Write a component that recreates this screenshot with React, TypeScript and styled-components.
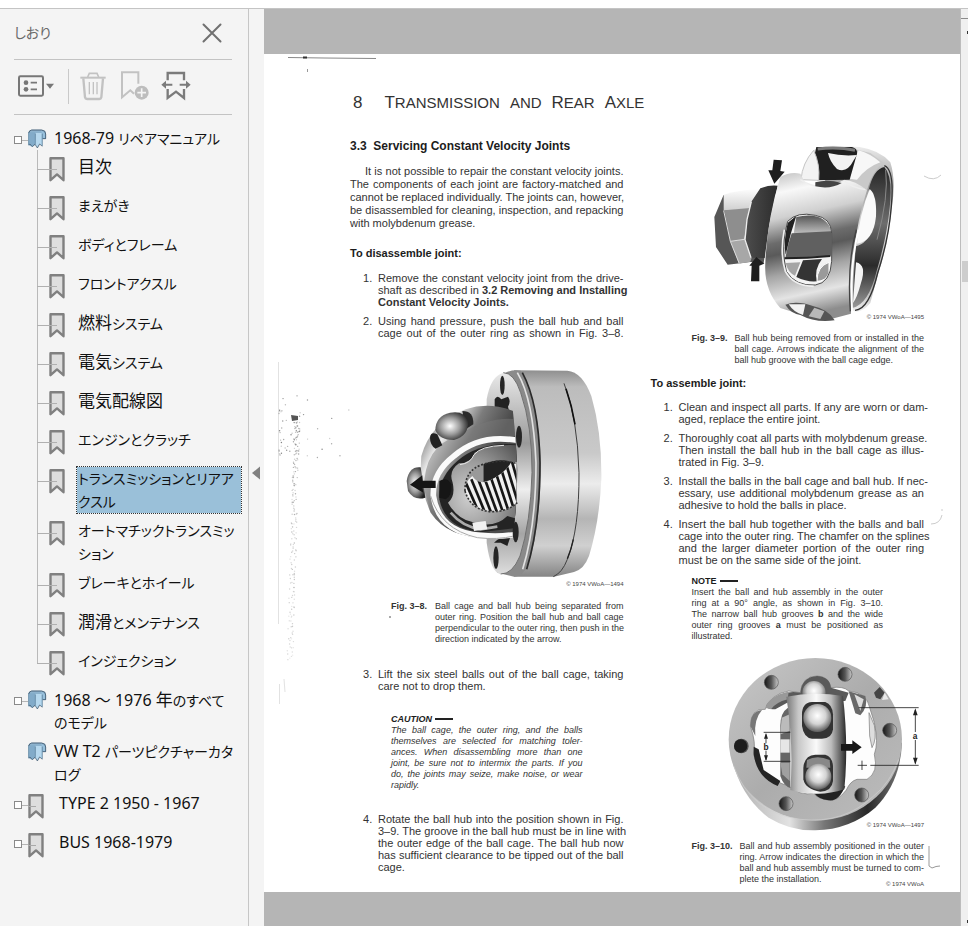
import React from "react";
import styled, { createGlobalStyle, css } from "styled-components";

const GlobalStyle = createGlobalStyle`
  *, *::before, *::after { box-sizing: border-box; }
  body { margin: 0; background: #fff; }
  h1, h2, h3, p, ol, ul, li, figure { margin: 0; padding: 0; }
  ol, ul { list-style: none; }
  button { font: inherit; color: inherit; background: none; border: 0; padding: 0; cursor: pointer; }
`;

/* ---------- window frame ---------- */

const Window = styled.div`
  display: flex;
  flex-direction: column;
  min-height: 100vh;
`;

const TopStrip = styled.div`
  height: 9px;
  flex: none;
  background: #fff;
  border-bottom: 1px solid #c4c4c4;
`;

const Workspace = styled.div`
  flex: 1;
  display: grid;
  grid-template-columns: 249px 15px minmax(0, 1fr) 8px;
`;

/* ---------- bookmark panel ---------- */

const Panel = styled.aside`
  background: #f4f4f4;
  border-right: 1px solid #c6c6c6;
  color: #111;
  font-family: "Noto Sans", "Noto Sans CJK JP", sans-serif;
  font-size: 14px;
  font-feature-settings: "palt";
`;

const PanelHeader = styled.header`
  display: flex;
  align-items: center;
  justify-content: space-between;
  height: 51px;
  margin: 0 16px 0 14px;
  padding: 0 10px 2px 0;
  border-bottom: 1px solid #c3c3c3;
`;

const PanelTitle = styled.h2`
  font-size: 14px;
  font-weight: 400;
  line-height: 20px;
  color: #6a6a6a;
`;

const Toolbar = styled.div`
  display: flex;
  align-items: center;
  height: 55px;
  margin: 0 16px 0 14px;
  padding: 0 0 2px 4px;
  border-bottom: 1px solid #c3c3c3;
`;

const ToolButton = styled.button<{ $gap?: number }>`
  display: flex;
  margin-left: ${(p) => p.$gap ?? 0}px;
`;

const ToolDivider = styled.span`
  width: 1px;
  height: 35px;
  margin: 0 11px 0 14px;
  background: #c9c9c9;
`;

const Tree = styled.ul`
  padding: 12px 7px 0 14px;
`;

const RootRow = styled.div<{ $tight?: boolean }>`
  display: grid;
  grid-template-columns: 14px 25px minmax(0, 1fr);
  min-height: ${(p) => (p.$tight ? 28 : 39)}px;
  padding-bottom: ${(p) => (p.$tight ? 5 : 6)}px;
`;

const Expander = styled.button<{ $hidden?: boolean }>`
  display: ${(p) => (p.$hidden ? "none" : "flex")};
  align-items: center;
  align-self: start;
  height: 8px;
  margin-top: 9px;
  &::before {
    content: "";
    width: 8px;
    height: 8px;
    border: 1px solid #8a8a8a;
    background: #fff;
  }
  &::after {
    content: "";
    width: 7px;
    height: 1px;
    background: #b5b5b5;
  }
`;

const RootIcon = styled.span`
  grid-column: 2;
  display: flex;
  align-items: flex-start;
`;

const Children = styled.ul`
  padding-left: 23px;
`;

const ChildRow = styled.li`
  position: relative;
  display: grid;
  grid-template-columns: 28px minmax(0, 1fr);
  min-height: 39px;
  padding: 0 0 6px 12px;
  &::before {
    content: "";
    position: absolute;
    left: 0;
    top: 0;
    bottom: 0;
    border-left: 1px solid #b9b9b9;
  }
  &:first-child::before { top: -5px; }
  &:last-child::before { bottom: auto; height: 15px; }
  &::after {
    content: "";
    position: absolute;
    left: 0;
    top: 14px;
    width: 20px;
    height: 1px;
    background: #b0b0b0;
  }
`;

const Label = styled.button<{ $selected?: boolean; $indent?: boolean }>`
  display: block;
  align-self: start;
  text-align: left;
  line-height: 23px;
  white-space: nowrap;
  padding-left: ${(p) => (p.$indent ? 5 : 0)}px;
  ${(p) =>
    p.$selected &&
    css`
      background: #9ac0d9;
      outline: 1px dotted #333;
    `}
`;

const LabelLine = styled.span`
  display: block;
  height: 23px;
  padding-left: 1px;
`;

const Kanji = styled.span`
  font-size: 17px;
`;

const Latin = styled.span`
  font-size: 16px;
`;

const Gutter = styled.div`
  background: #f4f4f4;
  display: flex;
  align-items: flex-start;
  padding: 457px 0 0 3px;
`;

const CollapseButton = styled.button`
  display: flex;
`;

/* ---------- document viewer ---------- */

const Viewer = styled.main`
  background: #b5b5b5;
  padding-top: 45px;
`;

const ScrollTrack = styled.div`
  display: flex;
  flex-direction: column;
  background: #f0f0f0;
  border-left: 1px solid #bdbdbd;
`;

const ScrollHead = styled.div`
  height: 10px;
  border-bottom: 1px solid #8c8c8c;
`;

const ScrollArrow = styled.span`
  align-self: flex-end;
  width: 1px;
  height: 3px;
  margin: 12px 0 3px;
  background: #333;
`;

const ScrollThumb = styled.div`
  height: 21px;
  margin: 224px 0 auto 1px;
  background: #cdcdcd;
`;

const Page = styled.article`
  position: relative;
  background: #fff;
  color: #333;
  font-family: "Liberation Sans", Arial, sans-serif;
  font-size: 11px;
  line-height: 12px;
  padding: 38px 36px 4px 86px;
`;

const ScanMarks = styled.svg`
  position: absolute;
  left: 0;
  top: 0;
  width: 100%;
  height: 100%;
  pointer-events: none;
`;

const PageTitle = styled.h1`
  display: flex;
  align-items: baseline;
  gap: 10px;
  padding-left: 3px;
  font-size: 17px;
  font-weight: 400;
  line-height: 21px;
  white-space: nowrap;
`;

const PageNumber = styled.span`
  margin-right: 12px;
`;

const SmallCaps = styled.span`
  font-size: 15px;
`;

const Columns = styled.div`
  display: grid;
  grid-template-columns: repeat(2, minmax(0, 1fr));
  column-gap: 27px;
  padding-top: 26px;
`;

const Column = styled.section``;

const SectionTitle = styled.h2`
  font-size: 12px;
  line-height: 14px;
  font-weight: 700;
  white-space: pre;
  color: #1c1c1c;
`;

const Intro = styled.p`
  margin-top: 12px;
  line-height: 13px;
`;

const Line = styled.span<{ $end?: boolean; $indent?: boolean }>`
  display: block;
  white-space: nowrap;
  text-align: justify;
  text-align-last: ${(p) => (p.$end ? "left" : "justify")};
  padding-left: ${(p) => (p.$indent ? 15 : 0)}px;
`;

const StepTitle = styled.h3<{ $top: number }>`
  margin-top: ${(p) => p.$top}px;
  font-size: 11px;
  line-height: 14px;
  font-weight: 700;
  color: #1c1c1c;
`;

const Steps = styled.ol<{ $top: number }>`
  display: flex;
  flex-direction: column;
  gap: 7px;
  margin-top: ${(p) => p.$top}px;
  padding-left: 13px;
`;

const Step = styled.li`
  display: grid;
  grid-template-columns: 15px minmax(0, 1fr);
`;

const Notice = styled.div<{ $top: number; $italic?: boolean }>`
  margin: ${(p) => p.$top}px 41px 0 41px;
  font-size: 9px;
  line-height: 11px;
  font-style: ${(p) => (p.$italic ? "italic" : "normal")};
`;

const NoticeTitle = styled.h3`
  display: flex;
  align-items: center;
  gap: 3px;
  font-size: 9px;
  line-height: 12px;
  color: #1c1c1c;
  &::after {
    content: "";
    width: 18px;
    height: 2px;
    background: #222;
  }
`;

const Figure = styled.figure<{ $top: number }>`
  display: flex;
  flex-direction: column;
  margin-top: ${(p) => p.$top}px;
`;

const Drawing = styled.svg<{ $left: number }>`
  display: block;
  margin-left: ${(p) => p.$left}px;
  overflow: visible;
`;

const Credit = styled.small<{ $lift?: number }>`
  align-self: flex-end;
  margin-top: -${(p) => p.$lift ?? 0}px;
  font-size: 6px;
  line-height: 8px;
  color: #444;
`;

const Caption = styled.figcaption<{ $label: number; $top: number }>`
  display: grid;
  grid-template-columns: ${(p) => p.$label}px minmax(0, 1fr);
  margin-top: ${(p) => p.$top}px;
  padding-left: 41px;
  font-size: 9px;
  line-height: 11px;
`;

/* ---------- icons ---------- */

const BookmarkIcon = () => (
  <svg width="16" height="27" viewBox="0 0 16 27" aria-hidden="true">
    <path d="M1.500 3.300H14.500V25.200L8 19.400L1.500 25.200Z" fill="#dedede" stroke="#808080" strokeWidth="2.400" strokeLinejoin="round" />
    <path d="M0 14.500H8" stroke="#a9a9a9" />
  </svg>
);

const BlueBookmarksIcon = () => (
  <svg width="19" height="23" viewBox="-1 -8 57 69" aria-hidden="true">
    <path d="M0 8Q2 0 10 0H38Q53 0 53 12V28H42V50L34 43L28 55L20 44L12 52L0 46Z" fill="#8db3ce" />
    <path d="M4 8H21V45L12 50L3 44Z" fill="#82abc9" />
    <path d="M22 10H40V47L33 42L27 53L21 44Z" fill="#b6d8ee" />
    <path d="M38 5Q49 5 50 13V26H43V13Z" fill="#97c0dc" />
    <path d="M1 10Q3 2 10 1H40Q52 2 52 13V27H43" fill="none" stroke="#3f566a" strokeWidth="2.500" />
    <path d="M21 12V44M1 9V46M42 12V49" stroke="#587b97" strokeWidth="2" fill="none" />
    <path d="M1 46L5 43L12 51L20 44L27 55L34 43L42 50" stroke="#3f566a" strokeWidth="2" fill="none" />
  </svg>
);

const ListIcon = () => (
  <svg width="36" height="30" viewBox="54 212 108 90" aria-hidden="true">
    <rect x="57" y="228" width="72" height="58" rx="4" fill="none" stroke="#777" strokeWidth="6" />
    <circle cx="78" cy="247" r="7" fill="#777" />
    <circle cx="78" cy="267" r="7" fill="#777" />
    <path d="M92 247H111M92 267H111" stroke="#777" strokeWidth="5" />
    <path d="M138 250H162L150 265Z" fill="#777" />
  </svg>
);

const TrashIcon = () => (
  <svg width="26" height="30" viewBox="239 210 78 90" fill="none" stroke="#c2c2c2" aria-hidden="true">
    <path d="M240 230H316" strokeWidth="6" />
    <path d="M262 228L267 217H290L295 228" strokeWidth="5" />
    <path d="M249 232L254 289Q255 294 260 294H297Q302 294 303 289L308 232" strokeWidth="7" />
    <path d="M267 243V280M279 243V280M290 243V280" strokeWidth="4" />
  </svg>
);

const AddBookmarkIcon = () => (
  <svg width="28" height="30" viewBox="363 212 84 90" fill="none" stroke="#c2c2c2" aria-hidden="true">
    <path d="M415 250V216H366V291L391 270L402 280" strokeWidth="6" />
    <circle cx="425" cy="277" r="21" fill="#bdbdbd" stroke="none" />
    <path d="M425 264V290M412 277H438" stroke="#f4f4f4" strokeWidth="5" />
  </svg>
);

const ExpandBookmarkIcon = () => (
  <svg width="30" height="30" viewBox="483 210 90 90" fill="none" stroke="#7b7b7b" aria-hidden="true">
    <path d="M503 238V216H552V238M503 264V291L528 272L552 291V264" strokeWidth="7" />
    <path d="M490 251H517M539 251H566" strokeWidth="6" />
    <path d="M484 251L498 239V263ZM572 251L558 239V263Z" fill="#7b7b7b" stroke="none" />
  </svg>
);

const CloseIcon = () => (
  <svg width="20" height="20" viewBox="0 0 20 20" aria-hidden="true">
    <path d="M1.500 1.500L18.500 18.500M18.500 1.500L1.500 18.500" stroke="#707070" strokeWidth="2" strokeLinecap="round" />
  </svg>
);

const CollapseIcon = () => (
  <svg width="9" height="14" viewBox="0 0 9 14" aria-hidden="true">
    <path d="M8 0.500V13.500L0 7Z" fill="#808080" />
  </svg>
);

/* ---------- figures ---------- */

const HubRemovalDrawing = () => (
  <Drawing $left={61} width="187" height="180" viewBox="35 40 561 540" role="img" aria-label="Ball hub removed from ball cage">
    <defs>
      <linearGradient id="cageBody" x1="0" y1="0" x2="0.15" y2="1">
        <stop offset="0" stopColor="#bdbdbd" />
        <stop offset="0.15" stopColor="#f8f8f8" />
        <stop offset="0.32" stopColor="#d0d0d0" />
        <stop offset="0.48" stopColor="#6c6c6c" />
        <stop offset="0.56" stopColor="#5a5a5a" />
        <stop offset="0.7" stopColor="#a5a5a5" />
        <stop offset="0.86" stopColor="#e4e4e4" />
        <stop offset="1" stopColor="#8d8d8d" />
      </linearGradient>
      <linearGradient id="cageRim" x1="0" y1="0" x2="0" y2="1">
        <stop offset="0" stopColor="#eee" />
        <stop offset="0.25" stopColor="#9a9a9a" />
        <stop offset="0.5" stopColor="#e0e0e0" />
        <stop offset="0.8" stopColor="#999" />
        <stop offset="1" stopColor="#f0f0f0" />
      </linearGradient>
      <linearGradient id="cageInside" x1="0" y1="0" x2="0" y2="1">
        <stop offset="0" stopColor="#252525" />
        <stop offset="0.4" stopColor="#6d6d6d" />
        <stop offset="0.7" stopColor="#2b2b2b" />
        <stop offset="1" stopColor="#999" />
      </linearGradient>
      <linearGradient id="hubTop" x1="0" y1="0" x2="0" y2="1">
        <stop offset="0" stopColor="#fcfcfc" />
        <stop offset="1" stopColor="#cfcfcf" />
      </linearGradient>
      <linearGradient id="hubDark" x1="0" y1="0" x2="1" y2="0">
        <stop offset="0" stopColor="#4d4d4d" />
        <stop offset="1" stopColor="#2c2c2c" />
      </linearGradient>
      <linearGradient id="windowFace" x1="0" y1="0" x2="0" y2="1">
        <stop offset="0" stopColor="#555" />
        <stop offset="1" stopColor="#c0c0c0" />
      </linearGradient>
    </defs>
    <path d="M70 195L42 262L47 352L82 405L150 397L190 400L193 380L150 360L132 330L95 250Z" fill="#565656" />
    <path d="M70 195Q130 178 182 180L152 237L70 243Z" fill="url(#hubTop)" />
    <path d="M72 242L150 235L138 290L132 329L90 335Z" fill="#8e8e8e" />
    <path d="M90 335L132 329L155 382L150 396L116 402Z" fill="#a7a7a7" />
    <path d="M70 243L90 335L117 402M90 335L132 329" stroke="#ddd" strokeWidth="3" fill="none" />
    <path d="M180 176Q205 165 232 168L206 290L193 385L152 384L134 330L140 270L153 216Z" fill="url(#hubDark)" />
    <path d="M153 216L140 270L134 330L152 384" stroke="#ededed" strokeWidth="4" fill="none" />

    <path d="M340 62Q350 48 400 48L478 52Q540 62 570 98Q587 150 575 230Q566 330 534 430L510 520Q480 556 455 542L430 300Z" fill="url(#cageRim)" />
    <path d="M552 112Q520 118 505 180Q535 240 520 290Q500 345 466 350L455 535Q505 525 530 420Q560 320 568 235Q578 140 552 112Z" fill="url(#cageInside)" />
    <path d="M508 178Q530 195 527 260Q520 335 470 342Q478 250 508 178Z" fill="#fafafa" />
    <path d="M467 398Q500 405 482 460Q470 505 458 520Z" fill="#f4f4f4" />
    <path d="M552 108Q583 120 573 230Q565 330 532 430Q506 540 464 542" stroke="#333" strokeWidth="4" fill="none" />
    <path d="M556 120Q566 200 530 330" stroke="#888" strokeWidth="3" fill="none" />

    <path d="M470 60L510 70L550 100Q518 120 500 182Q440 178 432 152Z" fill="#c9c9c9" />
    <path d="M475 62Q510 72 540 98Q500 112 470 150Q445 150 440 140Z" fill="#f7f7f7" />
    <path d="M348 52H455Q472 56 470 72L448 150L350 152Q360 110 342 80Z" fill="#202020" />
    <path d="M383 70Q425 80 470 76L460 92Q440 132 410 118Q388 96 383 70Z" fill="#f2f2f2" />
    <path d="M352 58Q410 50 464 62" stroke="#7a7a7a" strokeWidth="9" fill="none" />
    <path d="M340 62Q306 100 302 150L355 152Q360 105 340 62Z" fill="#f3f3f3" stroke="#c5c5c5" strokeWidth="3" />

    <path d="M240 142Q268 126 300 132L315 160Q370 185 432 152Q460 150 500 182Q450 330 452 552L378 572Q300 555 240 535Q190 480 195 400Q200 270 240 142Z" fill="url(#cageBody)" />
    <path d="M300 150Q360 190 432 153Q450 172 495 180" stroke="#eee" strokeWidth="4" fill="none" />
    <path d="M345 158Q380 148 424 160Q390 180 345 170Z" fill="#444" />
    <path d="M475 300Q448 400 455 545" stroke="#fff" strokeWidth="6" fill="none" />
    <path d="M468 300Q440 400 450 545" stroke="#444" strokeWidth="4" fill="none" />

    <path d="M262 275Q290 245 345 257Q392 265 394 310V395Q390 460 345 466Q285 470 258 425Q240 350 262 275Z" fill="#f3f3f3" />
    <path d="M288 262Q340 250 370 270Q392 285 392 310L280 312Z" fill="url(#windowFace)" />
    <path d="M274 311L392 305V378L255 386Q262 345 274 311Z" fill="#606060" />
    <path d="M288 258L262 280Q248 340 256 375L272 310Z" fill="#222" />
    <path d="M252 386Q320 386 390 379" stroke="#222" strokeWidth="6" fill="none" />
    <path d="M308 392L365 388Q340 420 350 455Q320 458 288 442Z" fill="#343434" />
    <path d="M350 455Q350 410 386 398V430Q376 455 350 455Z" fill="#9a9a9a" stroke="#fff" strokeWidth="3" />
    <path d="M256 400L300 398L284 438Q262 428 256 400Z" fill="#a5a5a5" />
    <path d="M262 275Q290 245 345 257Q392 265 394 310V395Q390 460 345 466Q285 470 258 425Q240 350 262 275Z" fill="none" stroke="#4c4c4c" strokeWidth="3" />
    <path d="M252 300Q238 370 255 425Q278 468 340 470" stroke="#eee" strokeWidth="5" fill="none" />

    <path d="M255 525Q290 512 340 530Q385 540 403 572Q345 580 300 556Q270 550 255 525Z" fill="#555" />
    <path d="M265 524L315 524L308 556Q280 548 265 524Z" fill="#f3f3f3" />
    <path d="M342 534L372 545L360 568L325 560Z" fill="#b8b8b8" />

    <path d="M220 90L245 92L240 124L253 126L222 162L204 122L216 122Z" fill="#1e1e1e" />
    <path d="M152 455H177V408L192 402L168 382L147 408H154Z" fill="#1e1e1e" />
  </Drawing>
);

const splines = Array.from({ length: 13 }, (_, i) => i);

const RingSeparationDrawing = () => (
  <Drawing $left={54} width="203" height="214" viewBox="40 30 609 642" role="img" aria-label="Ball cage and hub separated from outer ring">
    <defs>
      <linearGradient id="ringSide" x1="0" y1="0" x2="0" y2="1">
        <stop offset="0" stopColor="#8f8f8f" />
        <stop offset="0.08" stopColor="#bcbcbc" />
        <stop offset="0.4" stopColor="#c9c9c9" />
        <stop offset="0.55" stopColor="#ececec" />
        <stop offset="0.72" stopColor="#b5b5b5" />
        <stop offset="0.85" stopColor="#d0d0d0" />
        <stop offset="1" stopColor="#858585" />
      </linearGradient>
      <linearGradient id="ringFace" x1="0" y1="0" x2="0" y2="1">
        <stop offset="0" stopColor="#e9e9e9" />
        <stop offset="0.35" stopColor="#9a9a9a" />
        <stop offset="0.58" stopColor="#eee" />
        <stop offset="0.8" stopColor="#a5a5a5" />
        <stop offset="1" stopColor="#ddd" />
      </linearGradient>
      <linearGradient id="sphere" x1="0" y1="0.1" x2="0.6" y2="0.5">
        <stop offset="0" stopColor="#4e4e4e" />
        <stop offset="0.35" stopColor="#ececec" />
        <stop offset="0.65" stopColor="#7c7c7c" />
        <stop offset="1" stopColor="#4b4b4b" />
      </linearGradient>
      <radialGradient id="steel" cx="0.45" cy="0.5" r="0.6">
        <stop offset="0" stopColor="#fff" />
        <stop offset="0.5" stopColor="#9c9c9c" />
        <stop offset="1" stopColor="#222" />
      </radialGradient>
      <radialGradient id="hubFace" cx="0.3" cy="0.65" r="0.9">
        <stop offset="0" stopColor="#cfcfcf" />
        <stop offset="0.5" stopColor="#9b9b9b" />
        <stop offset="1" stopColor="#555" />
      </radialGradient>
      <clipPath id="leftOfRing"><path d="M40 30H350Q372 180 380 340Q380 480 350 660H40Z" /></clipPath>
      <clipPath id="bore"><path d="M378 318V440Q350 468 300 466Q235 455 223 400Q225 375 245 360Q265 390 300 372Q345 350 362 318Z" /></clipPath>
    </defs>
    <path d="M370 43L530 44Q575 48 602 120Q634 230 632 370Q626 500 595 600Q580 640 550 648L490 662H370Z" fill="url(#ringSide)" />
    <path d="M520 82Q560 180 565 350Q566 520 530 610Q515 650 488 662" stroke="#404040" strokeWidth="3" fill="none" />
    <path d="M526 98Q544 150 553 205" stroke="#111" strokeWidth="5" fill="none" />
    <path d="M548 550Q542 580 530 608" stroke="#222" strokeWidth="4" fill="none" />
    <path d="M340 53Q360 40 390 44Q440 120 450 300Q452 500 415 620Q400 660 370 662L320 650Z" fill="#8a8a8a" />
    <path d="M395 50Q444 140 448 320Q448 510 408 640" stroke="#2a2a2a" strokeWidth="5" fill="none" />
    <path d="M380 50Q428 130 436 320Q436 510 396 640" stroke="#e2e2e2" strokeWidth="5" fill="none" />
    <path d="M338 50Q370 50 390 110Q425 210 424 350Q420 500 388 600Q365 655 330 654Q300 650 288 560V130Q300 60 338 50Z" fill="url(#ringFace)" />
    <path d="M338 50Q370 50 390 110Q425 210 424 350Q420 500 388 600Q365 655 330 654" stroke="#707070" strokeWidth="3" fill="none" />
    <path d="M312 130Q320 115 332 130L352 122Q362 135 352 152L365 205Q330 210 312 180Z" fill="#222" />
    <circle cx="345" cy="176" r="18" fill="url(#steel)" />
    <path d="M310 560Q330 540 360 540L350 570L330 560Z" fill="#222" />

    <g clipPath="url(#leftOfRing)">
      <path d="M380 170Q300 135 225 160Q120 200 92 300Q84 390 120 470Q170 545 290 545L400 530Z" fill="url(#sphere)" />
      <path d="M380 240Q250 245 180 310Q130 370 122 470L100 400Q100 270 200 240Q290 180 380 190Z" fill="#777" opacity="0.5" />
      <path d="M390 255Q270 230 190 300Q125 350 128 420Q145 530 270 538Q340 545 400 530" stroke="#fafafa" strokeWidth="17" fill="none" />
      <path d="M385 266Q270 255 200 315Q142 365 146 430Q165 520 275 528L385 515Z" fill="#242424" />
      <path d="M385 268Q300 262 252 290Q245 320 205 322Q172 345 186 380Q195 420 172 440Q200 490 245 498Q310 520 350 480L385 490Z" fill="url(#hubFace)" />
      <path d="M340 268Q270 270 250 296Q240 322 208 326" stroke="#e6e6e6" strokeWidth="3" fill="none" />
      <path d="M180 470Q215 512 270 520L320 512" stroke="#aaa" strokeWidth="8" fill="none" />
      <path d="M245 500L285 495L290 520L250 525Z" fill="#f2f2f2" />
      <path d="M120 420Q150 520 260 545Q320 552 370 540" stroke="#aaa" strokeWidth="3" fill="none" />
    </g>

    <path d="M278 325Q325 305 362 318Q345 350 300 372L278 378Z" fill="#222" />
    <path d="M223 400Q225 350 278 325V378L245 376Z" fill="#999" />
    <g clipPath="url(#bore)">
      <rect x="215" y="310" width="170" height="165" fill="#f0f0f0" />
      {splines.map((i) => (
        <path key={i} d={`M${208 + i * 17} ${388 - i * 9}L${250 + i * 17} ${478 - i * 3}`} stroke="#161616" strokeWidth="8" />
      ))}
    </g>
    <path d="M223 405Q222 340 278 325Q330 308 375 322M223 405Q240 462 300 467Q350 468 380 440" fill="none" stroke="#333" strokeWidth="5" strokeDasharray="6 5" />

    <ellipse cx="335" cy="88" rx="7" ry="29" fill="#262626" />
    <ellipse cx="385" cy="242" rx="9" ry="33" fill="#262626" />
    <ellipse cx="375" cy="528" rx="9" ry="31" fill="#262626" />
    <ellipse cx="316" cy="605" rx="8" ry="34" fill="#262626" />

    <path d="M118 245Q120 225 140 235L155 268L135 278Q118 268 118 245Z" fill="#222" />
    <path d="M215 165Q250 165 248 205L225 220Z" fill="#2b2b2b" />
    <path d="M134 222Q135 180 178 170Q220 162 232 195Q235 240 190 252Q145 252 134 222Z" fill="url(#steel)" />
    <path d="M48 375Q55 330 90 334L104 425Q70 435 52 405Z" fill="url(#steel)" />
    <path d="M58 386L95 358L96 374H135V396H96L98 410Z" fill="#151515" />
    <path d="M146 375Q170 360 182 385Q185 420 165 430L146 425Z" fill="#161616" />
  </Drawing>
);

const boltHoles: [number, number][] = [[213, 129], [434, 105], [568, 273], [257, 493], [484, 467]];

const AssemblyDrawing = () => (
  <Drawing $left={76} width="195" height="176" viewBox="80 50 585 528" role="img" aria-label="Ball and hub assembly in outer ring">
    <defs>
      <linearGradient id="discSide" x1="0" y1="0" x2="1" y2="0">
        <stop offset="0" stopColor="#aaa" />
        <stop offset="0.35" stopColor="#e2e2e2" />
        <stop offset="0.55" stopColor="#777" />
        <stop offset="0.8" stopColor="#292929" />
        <stop offset="1" stopColor="#777" />
      </linearGradient>
      <linearGradient id="discFace" x1="0" y1="0" x2="1" y2="1">
        <stop offset="0" stopColor="#c8c8c8" />
        <stop offset="0.5" stopColor="#acacac" />
        <stop offset="1" stopColor="#bdbdbd" />
      </linearGradient>
      <linearGradient id="barrel" x1="0" y1="0" x2="1" y2="0">
        <stop offset="0" stopColor="#777" />
        <stop offset="0.2" stopColor="#c7c7c7" />
        <stop offset="0.5" stopColor="#fafafa" />
        <stop offset="0.75" stopColor="#bcbcbc" />
        <stop offset="1" stopColor="#292929" />
      </linearGradient>
      <linearGradient id="boltHole" x1="0" y1="0" x2="1" y2="0">
        <stop offset="0" stopColor="#151515" />
        <stop offset="0.5" stopColor="#555" />
        <stop offset="1" stopColor="#ccc" />
      </linearGradient>
      <radialGradient id="ball" cx="0.5" cy="0.42" r="0.55">
        <stop offset="0" stopColor="#fff" />
        <stop offset="0.55" stopColor="#d3d3d3" />
        <stop offset="1" stopColor="#666" />
      </radialGradient>
    </defs>
    <path d="M86 310Q105 460 205 535Q270 575 345 573Q450 570 525 505Q600 430 605 310Z" fill="url(#discSide)" />
    <ellipse cx="345" cy="300" rx="260" ry="244" fill="url(#discFace)" />
    <path d="M100 380Q150 520 300 540Q430 555 520 470Q570 430 595 360" stroke="#d0d0d0" strokeWidth="2" fill="none" />
    <path d="M150 260Q152 205 195 210Q210 165 265 155L300 160Q305 110 350 110Q385 110 392 145Q430 140 445 155Q500 160 508 205L522 250Q535 310 522 345Q535 400 500 420L470 420Q450 425 438 452Q410 488 385 482Q355 480 340 462Q300 470 265 440Q230 430 205 408Q170 390 160 345Q168 310 150 260Z" fill="#fdfdfd" stroke="#777" strokeWidth="2" />
    <path d="M300 160Q305 112 350 110Q388 112 392 145L445 160L435 185H270L225 210Q190 210 200 195Q240 150 300 160Z" fill="#5a5a5a" />
    <path d="M195 205Q205 170 265 157L262 180Q225 190 212 210Z" fill="#999" />
    <path d="M445 156L495 170Q505 200 480 228L465 222Z" fill="#696969" />
    <path d="M462 165L490 180L480 215Z" fill="#ddd" />
    <path d="M506 220L522 258Q530 300 515 325L508 290Z" fill="#ddd" stroke="#777" strokeWidth="2" />
    <path d="M150 260Q150 215 185 212Q160 240 165 290Z" fill="#777" />
    <path d="M160 322L175 330L190 392L240 425L232 440Q170 415 160 345Z" fill="#242424" />
    <path d="M340 460L435 440Q415 488 385 483Q355 480 340 460Z" fill="#222" />
    <circle cx="341" cy="160" r="35" fill="url(#ball)" />
    <path d="M262 206Q240 220 240 260V410Q250 440 270 446V206Z" fill="#666" />
    <path d="M244 235L268 225V275L240 285Z" fill="#bbb" />
    <path d="M240 300H268V340H240Z" fill="#e6e6e6" />
    <path d="M240 370H268V425L246 405Z" fill="#a0a0a0" />
    <path d="M258 172Q340 156 428 170Q445 320 432 450Q385 465 345 463Q300 462 270 452Q280 310 258 172Z" fill="url(#barrel)" />
    <path d="M305 225Q305 190 335 188H375Q396 195 398 225V270Q395 298 365 298H335Q310 295 305 260Z" fill="#333" />
    <circle cx="351" cy="236" r="42" fill="url(#ball)" />
    <path d="M309 385Q312 348 345 346H375Q396 352 398 380V425Q395 455 360 457Q315 450 309 420Z" fill="#333" />
    <path d="M320 362Q350 345 388 362L390 385H318Z" fill="#888" />
    <circle cx="354" cy="412" r="39" fill="url(#ball)" />
    {boltHoles.map(([x, y]) => (
      <circle key={x} cx={x} cy={y} r="21" fill="url(#boltHole)" stroke="#555" strokeWidth="2" />
    ))}
    <circle cx="123" cy="320" r="22" fill="#555" />
    <circle cx="121" cy="320" r="20" fill="#1d1d1d" />
    <path d="M521 160L538 143L553 160L540 180L527 175Z" fill="#444" />
    <path d="M553 160L565 180L545 182Z" fill="#e8e8e8" />
    <path d="M422 314H456V303L484 324L456 344V334H422Z" fill="#181818" />
    <g stroke="#222" strokeWidth="2.500" fill="none">
      <path d="M475 205H655M510 378H655M645 212V278M645 302V372" />
      <path d="M190 279H270M190 366H270M197 285V312M197 334V362M472 378H500M485 364V392" />
    </g>
    <path d="M645 207L652 228H638ZM645 376L652 355H638ZM197 281L203 298H191ZM197 365L203 348H191Z" fill="#222" />
    <g fontFamily="Liberation Sans, Arial, sans-serif" fontSize="25" fontWeight="700" fill="#222" textAnchor="middle">
      <text x="644" y="299">a</text>
      <text x="197" y="333">b</text>
    </g>
  </Drawing>
);

/* Deterministic pseudo-random value in 0..1, used to scatter the toner dust. */
const noise = (n: number) => {
  const v = Math.sin(n * 12.9898) * 43758.5453;
  return v - Math.floor(v);
};

const smear = Array.from({ length: 190 }, (_, i) => {
  const t = Math.pow(i / 190, 1.3);
  return {
    x: 33 - t * 7 + (noise(i) - 0.5) * 6,
    y: 366 + t * 240 + noise(i + 500) * 4,
    o: (0.6 - t * 0.35) * (0.4 + noise(i + 900) * 0.6),
  };
});

const specks = Array.from({ length: 44 }, (_, i) => ({
  x: 15 + Math.pow(noise(i + 40), 2) * 80,
  y: 335 + noise(i + 300) * 70,
  o: 0.25 + noise(i + 77) * 0.5,
}));

const Marks = () => (
  <ScanMarks aria-hidden="true">
    <path d="M24 3.500L60 4L112 4.500" stroke="#888" strokeWidth="1" fill="none" />
    <path d="M39 3.500H43" stroke="#333" strokeWidth="2" />
    <path d="M43.500 15V18" stroke="#999" />
    <path d="M14.500 308V570" stroke="#e2e2e2" />
    <path d="M15.500 630V650M20 625L21 638" stroke="#e2e2e2" />
    <path d="M27 361L34 362V366L28 367Z" fill="#555" />
    {smear.map((s, i) => (
      <circle key={i} cx={s.x} cy={s.y} r="0.700" fill="#555" opacity={s.o} />
    ))}
    {specks.map((s, i) => (
      <circle key={i} cx={s.x} cy={s.y} r="0.700" fill="#555" opacity={s.o} />
    ))}
    <path d="M660 122Q670 128 677 121M667 470Q676 470 678 461M678 457V455" stroke="#ccc" fill="none" />
    <path d="M665 792V812L668 814Q672 812 676 812" stroke="#999" fill="none" />
    <path d="M125 563H127" stroke="#555" />
  </ScanMarks>
);

/* ---------- content ---------- */

type ChildEntry = { lines: string[]; selected?: boolean };

const chapters: ChildEntry[] = [
  { lines: ["目次"] },
  { lines: ["まえがき"] },
  { lines: ["ボディとフレーム"] },
  { lines: ["フロントアクスル"] },
  { lines: ["燃料システム"] },
  { lines: ["電気システム"] },
  { lines: ["電気配線図"] },
  { lines: ["エンジンとクラッチ"] },
  { lines: ["トランスミッションとリアア", "クスル"], selected: true },
  { lines: ["オートマチックトランスミッ", "ション"] },
  { lines: ["ブレーキとホイール"] },
  { lines: ["潤滑とメンテナンス"] },
  { lines: ["インジェクション"] },
];

/* Kanji, Latin and kana runs are set at different sizes so that they look even. */
const renderText = (text: string) =>
  text.split(/([\u4e00-\u9fff]+|[\x20-\x7e～]+)/).map((part, i) => {
    if (i % 2 === 0) return part;
    return /[\u4e00-\u9fff]/.test(part) ? <Kanji key={i}>{part}</Kanji> : <Latin key={i}>{part}</Latin>;
  });

const LabelText = ({ lines }: { lines: string[] }) => (
  <>
    {lines.map((line) => (
      <LabelLine key={line}>{renderText(line)}</LabelLine>
    ))}
  </>
);

type RootProps = { lines: string[]; blue?: boolean; leaf?: boolean; tight?: boolean; children?: React.ReactNode };

const RootItem = ({ lines, blue, leaf, tight, children }: RootProps) => (
  <li>
    <RootRow $tight={tight}>
      <Expander $hidden={leaf} aria-label="展開" />
      <RootIcon>{blue ? <BlueBookmarksIcon /> : <BookmarkIcon />}</RootIcon>
      <Label $indent={!blue}>
        <LabelText lines={lines} />
      </Label>
    </RootRow>
    {children}
  </li>
);

const BookmarkPanel = () => (
  <Panel>
    <PanelHeader>
      <PanelTitle>しおり</PanelTitle>
      <ToolButton aria-label="閉じる"><CloseIcon /></ToolButton>
    </PanelHeader>
    <Toolbar>
      <ToolButton aria-label="オプション"><ListIcon /></ToolButton>
      <ToolDivider />
      <ToolButton aria-label="削除"><TrashIcon /></ToolButton>
      <ToolButton $gap={15} aria-label="しおりを追加"><AddBookmarkIcon /></ToolButton>
      <ToolButton $gap={12} aria-label="現在のしおりを展開"><ExpandBookmarkIcon /></ToolButton>
    </Toolbar>
    <Tree>
      <RootItem lines={["1968-79 リペアマニュアル"]} blue tight>
        <Children>
          {chapters.map((c) => (
            <ChildRow key={c.lines[0]}>
              <BookmarkIcon />
              <Label $selected={c.selected}>
                <LabelText lines={c.lines} />
              </Label>
            </ChildRow>
          ))}
        </Children>
      </RootItem>
      <RootItem lines={["1968 ～ 1976 年のすべて", "のモデル"]} blue />
      <RootItem lines={["VW T2 パーツピクチャーカタ", "ログ"]} blue leaf />
      <RootItem lines={["TYPE 2 1950 - 1967"]} />
      <RootItem lines={["BUS 1968-1979"]} />
    </Tree>
  </Panel>
);

type StepItemProps = { n: number; lines: React.ReactNode[]; full?: boolean };

const StepItem = ({ n, lines, full }: StepItemProps) => (
  <Step>
    <span>{n}.</span>
    <div>
      {lines.map((l, i) => (
        <Line key={i} $end={!full && i === lines.length - 1}>{l}</Line>
      ))}
    </div>
  </Step>
);

const Block = ({ lines }: { lines: React.ReactNode[] }) => (
  <div>
    {lines.map((l, i) => (
      <Line key={i} $end={i === lines.length - 1}>{l}</Line>
    ))}
  </div>
);

const LeftColumn = () => (
  <Column>
    <SectionTitle>3.3  Servicing Constant Velocity Joints</SectionTitle>
    <Intro>
      <Line $indent>It is not possible to repair the constant velocity joints.</Line>
      <Line>The components of each joint are factory-matched and</Line>
      <Line>cannot be replaced individually. The joints can, however,</Line>
      <Line>be disassembled for cleaning, inspection, and repacking</Line>
      <Line $end>with molybdenum grease.</Line>
    </Intro>
    <StepTitle $top={16}>To disassemble joint:</StepTitle>
    <Steps $top={12}>
      <StepItem n={1} lines={[
        "Remove the constant velocity joint from the drive-",
        <>shaft as described in <b>3.2 Removing and Installing</b></>,
        <b>Constant Velocity Joints.</b>,
      ]} />
      <StepItem n={2} full lines={[
        "Using hand pressure, push the ball hub and ball",
        "cage out of the outer ring as shown in Fig. 3–8.",
      ]} />
    </Steps>
    <Figure $top={27}>
      <RingSeparationDrawing />
      <Credit>© 1974 VWoA—1494</Credit>
      <Caption $label={44} $top={13}>
        <b>Fig. 3–8.</b>
        <Block lines={[
          "Ball cage and ball hub being separated from",
          "outer ring. Position the ball hub and ball cage",
          "perpendicular to the outer ring, then push in the",
          "direction indicated by the arrow.",
        ]} />
      </Caption>
    </Figure>
    <Steps $top={23}>
      <StepItem n={3} lines={["Lift the six steel balls out of the ball cage, taking", "care not to drop them."]} />
    </Steps>
    <Notice $top={21} $italic>
      <NoticeTitle>CAUTION</NoticeTitle>
      <Block lines={[
        "The ball cage, the outer ring, and the balls",
        "themselves are selected for matching toler-",
        "ances. When disassembling more than one",
        "joint, be sure not to intermix the parts. If you",
        "do, the joints may seize, make noise, or wear",
        "rapidly.",
      ]} />
    </Notice>
    <Steps $top={22}>
      <StepItem n={4} lines={[
        "Rotate the ball hub into the position shown in Fig.",
        "3–9. The groove in the ball hub must be in line with",
        "the outer edge of the ball cage. The ball hub now",
        "has sufficient clearance to be tipped out of the ball",
        "cage.",
      ]} />
    </Steps>
  </Column>
);

const RightColumn = () => (
  <Column>
    <Figure $top={4}>
      <HubRemovalDrawing />
      <Credit $lift={10}>© 1974 VWoA—1495</Credit>
      <Caption $label={43} $top={12}>
        <b>Fig. 3–9.</b>
        <Block lines={[
          "Ball hub being removed from or installed in the",
          "ball cage. Arrows indicate the alignment of the",
          "ball hub groove with the ball cage edge.",
        ]} />
      </Caption>
    </Figure>
    <StepTitle $top={10}>To assemble joint:</StepTitle>
    <Steps $top={11}>
      <StepItem n={1} lines={["Clean and inspect all parts. If any are worn or dam-", "aged, replace the entire joint."]} />
      <StepItem n={2} lines={["Thoroughly coat all parts with molybdenum grease.", "Then install the ball hub in the ball cage as illus-", "trated in Fig. 3–9."]} />
      <StepItem n={3} lines={["Install the balls in the ball cage and ball hub. If nec-", "essary, use additional molybdenum grease as an", "adhesive to hold the balls in place."]} />
      <StepItem n={4} lines={["Insert the ball hub together with the balls and ball", "cage into the outer ring. The chamfer on the splines", "and the larger diameter portion of the outer ring", "must be on the same side of the joint."]} />
    </Steps>
    <Notice $top={9}>
      <NoticeTitle>NOTE</NoticeTitle>
      <Block lines={[
        "Insert the ball and hub assembly in the outer",
        "ring at a 90° angle, as shown in Fig. 3–10.",
        <>The narrow ball hub grooves <b>b</b> and the wide</>,
        <>outer ring grooves <b>a</b> must be positioned as</>,
        "illustrated.",
      ]} />
    </Notice>
    <Figure $top={14}>
      <AssemblyDrawing />
      <Credit $lift={11}>© 1974 VWoA—1497</Credit>
      <Caption $label={48} $top={12}>
        <b>Fig. 3–10.</b>
        <Block lines={[
          "Ball and hub assembly positioned in the outer",
          "ring. Arrow indicates the direction in which the",
          "ball and hub assembly must be turned to com-",
          "plete the installation.",
        ]} />
      </Caption>
      <Credit $lift={5}>© 1974 VWoA</Credit>
    </Figure>
  </Column>
);

export default function App() {
  return (
    <>
      <GlobalStyle />
      <Window>
        <TopStrip />
        <Workspace>
          <BookmarkPanel />
          <Gutter>
            <CollapseButton aria-label="パネルを閉じる"><CollapseIcon /></CollapseButton>
          </Gutter>
          <Viewer>
            <Page>
              <Marks />
              <PageTitle>
                <PageNumber>8</PageNumber>
                <span>T<SmallCaps>RANSMISSION</SmallCaps></span>
                <SmallCaps>AND</SmallCaps>
                <span>R<SmallCaps>EAR</SmallCaps></span>
                <span>A<SmallCaps>XLE</SmallCaps></span>
              </PageTitle>
              <Columns>
                <LeftColumn />
                <RightColumn />
              </Columns>
            </Page>
          </Viewer>
          <ScrollTrack>
            <ScrollHead />
            <ScrollArrow />
            <ScrollThumb />
            <ScrollArrow />
          </ScrollTrack>
        </Workspace>
      </Window>
    </>
  );
}
